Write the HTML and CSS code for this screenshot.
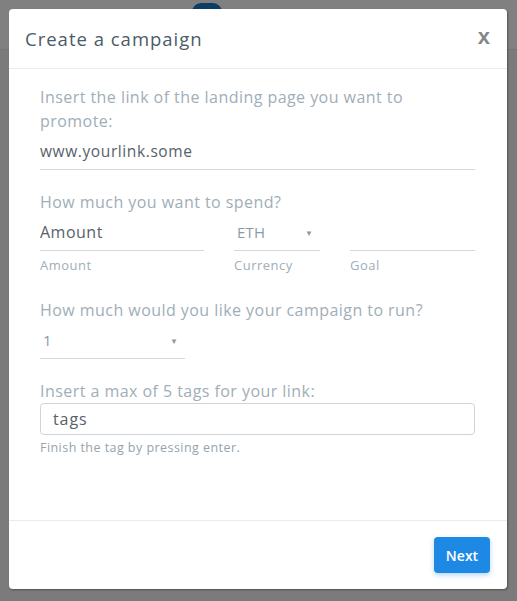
FILE: index.html
```html
<!DOCTYPE html>
<html lang="en">
<head>
<meta charset="utf-8">
<title>Create a campaign</title>
<link rel="stylesheet" href="styles.css">
</head>
<body>
<div class="page-top"><span class="page-tab"></span></div>
<div class="modal">
  <div class="modal-header">
    <h1 class="modal-title">Create a campaign</h1>
    <span class="modal-close">x</span>
  </div>
  <div class="modal-body">
    <div class="group first">
      <div class="label">Insert the link of the landing page you want to promote:</div>
      <div class="line-input"><span class="value">www.yourlink.some</span></div>
    </div>
    <div class="group">
      <div class="label">How much you want to spend?</div>
      <div class="spend-row">
        <div class="field">
          <div class="line-input"><span class="value big">Amount</span></div>
          <div class="hint">Amount</div>
        </div>
        <div class="field">
          <div class="line-input select"><span class="value light pad">ETH</span><span class="caret">▼</span></div>
          <div class="hint">Currency</div>
        </div>
        <div class="field">
          <div class="line-input"></div>
          <div class="hint">Goal</div>
        </div>
      </div>
    </div>
    <div class="group">
      <div class="label">How much would you like your campaign to run?</div>
      <div class="line-input select short"><span class="value light pad">1</span><span class="caret">▼</span></div>
    </div>
    <div class="group">
      <div class="label">Insert a max of 5 tags for your link:</div>
      <div class="box-input"><span class="value tags">tags</span></div>
      <div class="help">Finish the tag by pressing enter.</div>
    </div>
  </div>
  <div class="modal-footer">
    <button class="btn-next">Next</button>
  </div>
</div>
</body>
</html>
```
FILE: styles.css
```css
* { box-sizing: border-box; }
html, body { margin: 0; padding: 0; }
body {
  width: 517px;
  height: 601px;
  background: #7b7b7b;
  font-family: "Open Sans", "Liberation Sans", sans-serif;
  position: relative;
  overflow: hidden;
  padding-top: 9px;
}
.page-top {
  position: absolute;
  left: 0; top: 0;
  width: 100%;
  height: 50px;
  background: #808080;
  border-bottom: 1px solid #747474;
}
.page-tab {
  position: absolute;
  left: 192px; top: 3px;
  width: 30px; height: 20px;
  border-radius: 9px 9px 0 0;
  background: #0c3d63;
}
.modal {
  position: relative;
  margin-left: 9px;
  width: 498px;
  height: 580px;
  background: #fff;
  border-radius: 4px;
  box-shadow: 1px 1px 2px rgba(0,0,0,0.35);
  display: flex;
  flex-direction: column;
}
.modal-header {
  height: 60px;
  padding: 0 17px 0 16px;
  border-bottom: 1px solid #e9ecef;
  display: flex;
  align-items: center;
  justify-content: space-between;
}
.modal-title {
  margin: 0;
  font-size: 18.5px;
  font-weight: 400;
  color: #4b5b67;
  letter-spacing: 1px;
  margin-top: -1px;
}
.modal-close {
  font-family: "Liberation Sans", sans-serif;
  font-weight: 700;
  font-size: 22px;
  color: #878787;
  line-height: 1;
  margin-top: -4px;
}
.modal-body {
  flex: 1;
  padding: 16px 32px 0 31px;
}
.group { margin-top: 20px; }
.group.first { margin-top: 0; }
.label {
  font-size: 16px;
  line-height: 24px;
  color: #a0aeb8;
  font-weight: 400;
  letter-spacing: 0.45px;
}
.line-input {
  height: 37px;
  border-bottom: 1px solid #d3d8dc;
  display: flex;
  align-items: center;
  justify-content: space-between;
}
.value {
  font-size: 15.5px;
  color: #58616a;
  letter-spacing: 0.6px;
}
.value.big { font-size: 16px; letter-spacing: 0.5px; }
.value.tags { font-size: 16px; letter-spacing: 0.9px; }
.value.light { color: #8c9aa5; font-size: 15px; letter-spacing: 0.2px; }
.value.pad { padding-left: 3px; }
.caret {
  font-size: 8px;
  color: #8c9aa5;
  padding-right: 7px;
}
.select.short { width: 145px; }
.spend-row {
  display: grid;
  grid-template-columns: 164px 86px 1fr;
  column-gap: 30px;
  padding-bottom: 3px;
}
.hint {
  margin-top: 4px;
  font-size: 13px;
  line-height: 20px;
  color: #a0aeb8;
  letter-spacing: 0.5px;
}
.box-input {
  margin-top: 0;
  height: 32px;
  border: 1px solid #cfd4d8;
  border-radius: 4px;
  padding: 0 12px;
  display: flex;
  align-items: center;
}
.help {
  margin-top: 4px;
  font-size: 12.5px;
  line-height: 18px;
  color: #95a3ae;
  letter-spacing: 0.45px;
}
.modal-footer {
  height: 69px;
  border-top: 1px solid #e9ecef;
  display: flex;
  justify-content: flex-end;
  align-items: flex-start;
  padding: 16px 17px 0 0;
}
.btn-next {
  width: 56px;
  height: 36px;
  border: none;
  border-radius: 4px;
  background: #1e88e5;
  color: #fff;
  font-family: inherit;
  font-size: 14px;
  font-weight: 600;
  box-shadow: 0 2px 5px rgba(30,136,229,0.35);
  padding: 0;
}
```
